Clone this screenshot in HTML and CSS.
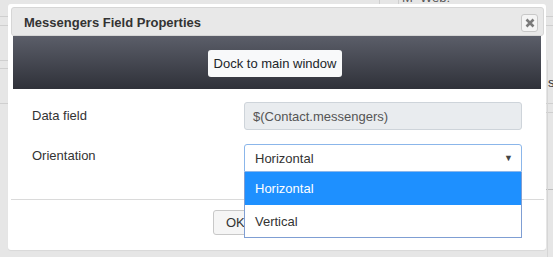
FILE: index.html
```html
<!DOCTYPE html>
<html>
<head>
<meta charset="utf-8">
<link rel="stylesheet" href="styles.css">
</head>
<body>
<div class="backdrop">
  <div class="bg-line l1"></div>
  <div class="bg-line l2"></div>
  <div class="bg-line l3"></div>
  <div class="bg-line l4"></div>
  <div class="bg-line l5"></div>
  <div class="bg-rline r1"></div>
  <div class="bg-rline r2"></div>
  <div class="bg-rline r3"></div>
  <div class="bg-rline r4"></div>
  <div class="bg-rline r5"></div>
  <div class="bg-vline v1"></div>
  <div class="bg-vline v2"></div>
  <div class="bg-vline v3"></div>
  <div class="bg-text t1">M&nbsp;&nbsp;Web:</div>
  <div class="bg-text t2">s</div>
</div>

<div class="dialog">
  <div class="dialog-header">
    <span class="dialog-title">Messengers Field Properties</span>
    <button class="close-btn" aria-label="close">
      <svg width="10" height="10" viewBox="0 0 10 10"><path d="M1.5 1.5 L8.5 8.5 M8.5 1.5 L1.5 8.5" stroke="#7a7a7a" stroke-width="2.6" stroke-linecap="butt"/></svg>
    </button>
  </div>
  <div class="toolbar">
    <button class="dock-btn">Dock to main window</button>
  </div>
  <div class="form">
    <div class="form-row">
      <label class="form-label">Data field</label>
      <div class="form-control readonly">$(Contact.messengers)</div>
    </div>
    <div class="form-row">
      <label class="form-label orient">Orientation</label>
      <div class="select-wrap">
        <div class="form-control select">
          <span>Horizontal</span>
          <span class="caret">&#9660;</span>
        </div>
        <ul class="dropdown">
          <li class="opt selected">Horizontal</li>
          <li class="opt">Vertical</li>
        </ul>
      </div>
    </div>
  </div>
  <div class="footer">
    <button class="btn">OK</button>
  </div>
</div>
</body>
</html>
```

FILE: styles.css
```css
* { box-sizing: border-box; }
html, body { margin: 0; padding: 0; }
body {
  width: 553px;
  height: 257px;
  background: #e6e6e6;
  font-family: "Liberation Sans", Arial, sans-serif;
  font-size: 13px;
  color: #333;
  position: relative;
  overflow: hidden;
}

.backdrop { position: absolute; inset: 0; }
.bg-line { position: absolute; left: 0; width: 8px; height: 1px; background: #cfcfcf; }
.l1 { top: 16px; } .l2 { top: 25px; } .l3 { top: 60px; } .l4 { top: 68px; } .l5 { top: 103px; }
.bg-rline { position: absolute; left: 546px; width: 7px; height: 1px; background: #cfcfcf; }
.r1 { top: 16px; } .r2 { top: 25px; } .r3 { top: 103px; } .r4 { top: 112px; } .r5 { top: 189px; background: #bdbdbd; }
.bg-vline { position: absolute; top: 0; width: 1px; height: 4px; background: #cfcfcf; }
.v1 { left: 379px; } .v2 { left: 398px; } 
.v3 { left: 547px; top: 60px; height: 197px; background: #d6d6d6; }
.bg-text { position: absolute; font-size: 13px; color: #555; }
.t1 { left: 402px; top: -10px; }
.t2 { left: 548px; top: 75px; color: #333; }

.dialog {
  position: absolute;
  left: 8px;
  top: 4px;
  width: 538px;
  height: 246px;
  background: #fff;
  border-radius: 3px;
  box-shadow: 0 1px 1px rgba(0,0,0,0.06);
  padding: 3px 2px 0 3px;
  display: flex;
  flex-direction: column;
}

.dialog-header {
  height: 29px;
  background: #e8e8e8;
  border: 1px solid #d6d6d6;
  border-radius: 3px;
  display: flex;
  align-items: center;
  justify-content: space-between;
  padding: 0 5px 0 12px;
}
.dialog-title {
  font-weight: bold;
  font-size: 13px;
  color: #333;
  margin-top: 1px;
}
.close-btn {
  width: 17px;
  height: 18px;
  padding: 0;
  margin-top: 2px;
  border: 1px solid #c8c8c8;
  border-radius: 3px;
  background: #f4f4f4;
  display: flex;
  align-items: center;
  justify-content: center;
}

.toolbar {
  margin: 0 3px 0 2px;
  height: 53px;
  background: linear-gradient(#5b5e69, #2f3139);
  display: flex;
  align-items: center;
  justify-content: center;
}
.dock-btn {
  height: 27px;
  padding: 0 6px;
  margin-top: 1px;
  margin-left: -4px;
  background: #f8f9fa;
  border: none;
  border-radius: 3px;
  font-family: "Liberation Sans", Arial, sans-serif;
  font-size: 13px;
  color: #212529;
}

.form {
  padding: 13px 0 0 21px;
  display: flex;
  flex-direction: column;
  gap: 14px;
  height: 111px;
  border-bottom: 1px solid #dadada;
}
.form-row {
  display: flex;
  align-items: center;
}
.form-label {
  width: 212px;
  font-size: 13px;
  color: #333;
  padding-bottom: 2px;
}
.form-label.orient { padding-bottom: 5px; }
.form-control {
  width: 278px;
  height: 28px;
  border: 1px solid #ced4da;
  border-radius: 3px;
  display: flex;
  align-items: center;
  font-size: 13px;
}
.readonly {
  background: #e9ecef;
  color: #555;
  padding-left: 8px;
}
.select-wrap { position: relative; }
.select {
  border-color: #8bb6ea;
  border-radius: 3px 3px 0 0;
  background: #fff;
  color: #333;
  padding: 0 8px 0 10px;
  justify-content: space-between;
}
.caret { font-size: 9px; color: #444; }
.dropdown {
  position: absolute;
  top: 100%;
  left: 0;
  width: 278px;
  margin: 0;
  padding: 0;
  list-style: none;
  background: #fff;
  border: 1px solid #7f9ed3;
  border-top: none;
  z-index: 5;
}
.opt {
  height: 32px;
  display: flex;
  align-items: center;
  padding-left: 10px;
  font-size: 13px;
  color: #333;
}
.opt.selected {
  height: 33px;
  background: #1e90ff;
  color: #fff;
}

.footer {
  display: flex;
  padding: 10px 0 0 202px;
}
.btn {
  min-width: 60px;
  height: 25px;
  padding: 0 12px;
  background: #f5f5f5;
  border: 1px solid #c8c8c8;
  border-radius: 3px;
  font-family: "Liberation Sans", Arial, sans-serif;
  font-size: 13px;
  color: #333;
  text-align: left;
}
```
